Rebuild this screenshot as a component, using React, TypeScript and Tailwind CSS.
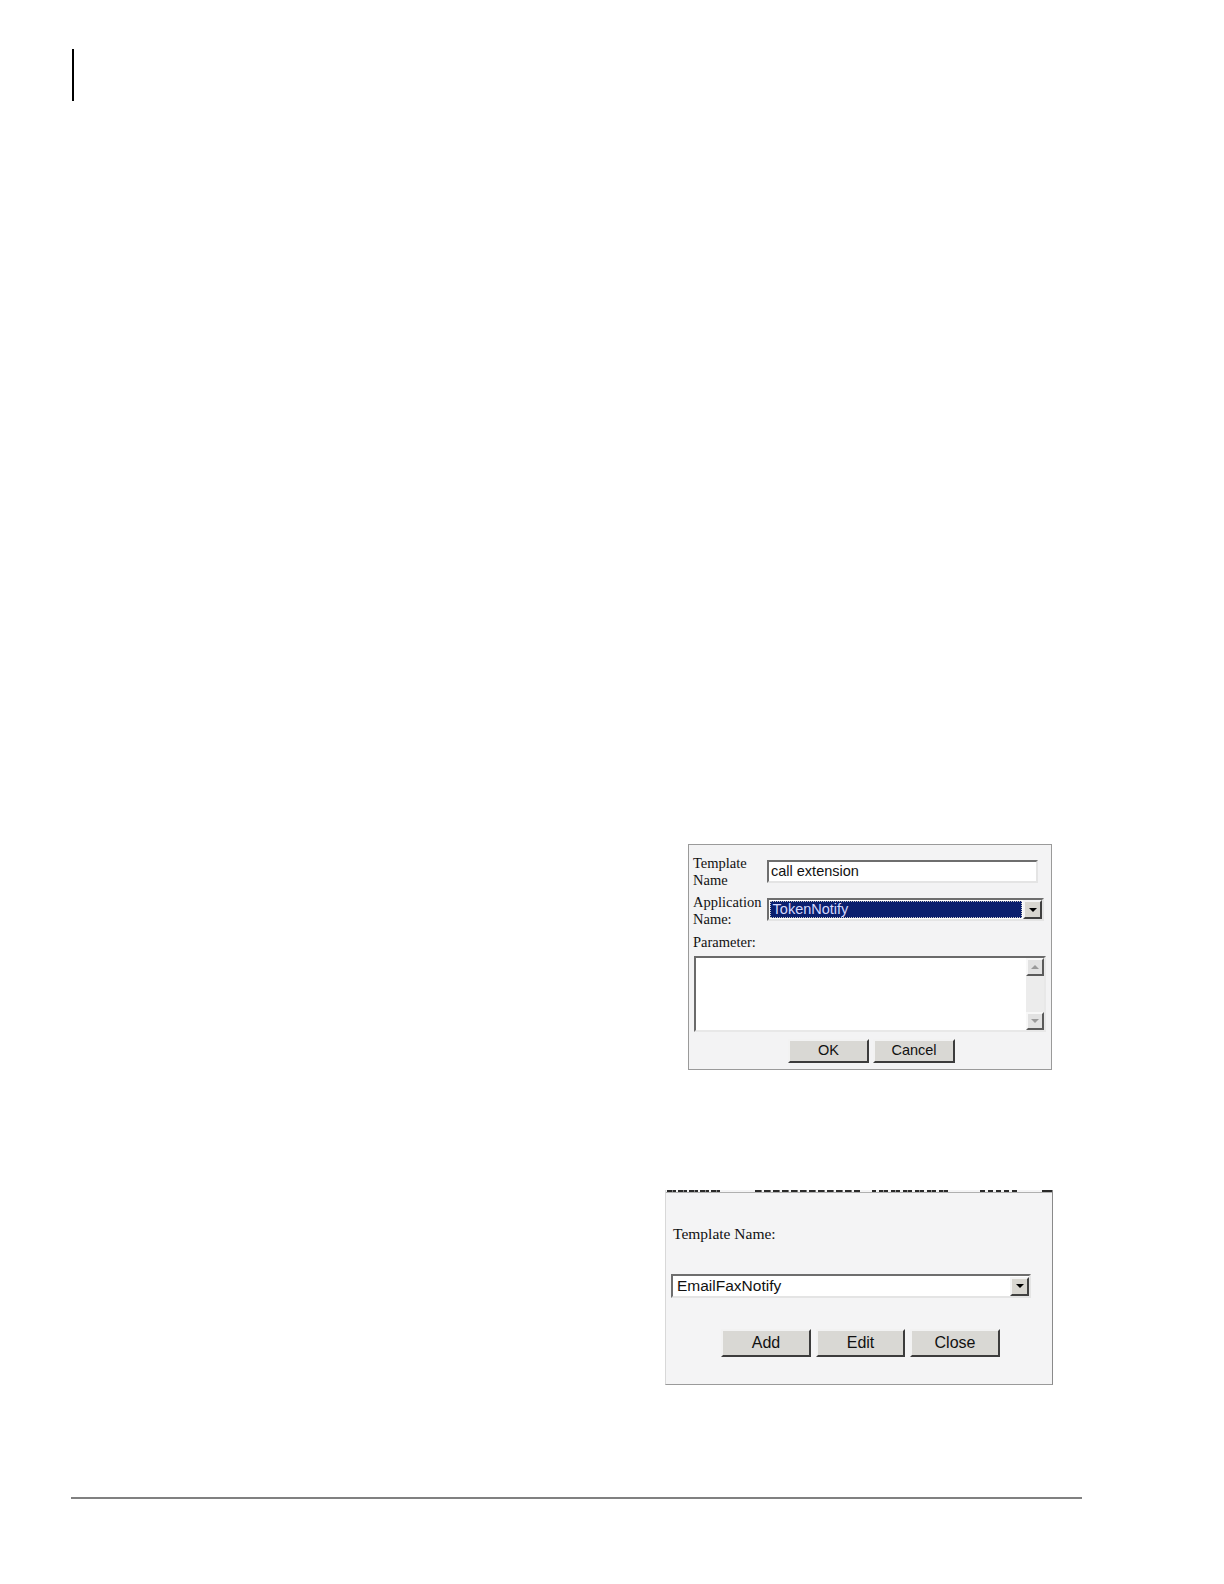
import React from "react";

const serif = { fontFamily: '"Liberation Serif", "Times New Roman", serif' };
const sans = { fontFamily: '"Liberation Sans", Arial, sans-serif' };

function Tri({ dir = "down", color = "#000" }: { dir?: "down" | "up"; color?: string }) {
  return (
    <svg width="8" height="4" viewBox="0 0 8 4">
      {dir === "down" ? (
        <polygon points="0,0 8,0 4,4" fill={color} />
      ) : (
        <polygon points="0,4 8,4 4,0" fill={color} />
      )}
    </svg>
  );
}

function DropBtn({ size = 17 }: { size?: number }) {
  return (
    <div
      className="flex items-center justify-center bg-[#d8d6d0] border-2 border-t-[#f4f4f4] border-l-[#f4f4f4] border-b-[#404040] border-r-[#404040] shrink-0"
      style={{ width: size, height: size }}
    >
      <Tri />
    </div>
  );
}

function Btn({ label, w, h }: { label: string; w: string; h: string }) {
  return (
    <div
      className={`${w} ${h} flex items-center justify-center bg-[#d9d8d4] border-2 border-t-[#f2f2f2] border-l-[#f2f2f2] border-b-[#3c3c3c] border-r-[#3c3c3c] text-[#111]`}
      style={sans}
    >
      {label}
    </div>
  );
}

export default function App() {
  return (
    <div className="w-[1224px] h-[1584px] bg-white overflow-hidden">
      {/* top-left vertical rule */}
      <div className="pt-[49px] pl-[72px]">
        <div className="w-[2px] h-[52px] bg-black" />
      </div>

      {/* Dialog 1 */}
      <div className="mt-[743px] ml-[688px] w-[364px] h-[226px] bg-[#f3f3f4] border border-[#9a9a9a] flex flex-col pl-[4px] pr-[7px]">
        <div className="flex mt-[10px]">
          <div className="w-[74px] text-[14.5px] leading-[17px] text-[#111]" style={serif}>
            Template
            <br />
            Name
          </div>
          <div className="mt-[5px] w-[271px] h-[23px] bg-white border-2 border-t-[#6e6e6e] border-l-[#6e6e6e] border-b-[#e4e4e4] border-r-[#e4e4e4] flex items-center pl-[2px] text-[14.5px] text-[#111]" style={sans}>
            call extension
          </div>
        </div>
        <div className="flex mt-[5px]">
          <div className="w-[74px] text-[14.5px] leading-[17px] text-[#111]" style={serif}>
            Application
            <br />
            Name:
          </div>
          <div className="mt-[4px] w-[279px] h-[23px] bg-white border-2 border-t-[#6e6e6e] border-l-[#6e6e6e] border-b-[#e4e4e4] border-r-[#e4e4e4] flex items-center">
            <div className="flex-1 h-[17px] ml-[1px] mr-[1px] bg-[#0a1f6e] border border-dotted border-[#c8c8c8] flex items-center pl-[2px] text-[14.5px] text-[#d4d8ff]" style={sans}>
              TokenNotify
            </div>
            <DropBtn size={19} />
          </div>
        </div>
        <div className="mt-[6px] text-[14.5px] leading-[17px] text-[#111]" style={serif}>
          Parameter:
        </div>
        <div className="mt-[5px] ml-[1px] w-[352px] h-[76px] bg-white border-2 border-t-[#6a6a6a] border-l-[#6a6a6a] border-b-[#e8e8e8] border-r-[#e8e8e8] flex justify-end">
          <div className="w-[18px] h-full flex flex-col bg-[#ececec]">
            <div className="h-[18px] flex items-center justify-center bg-[#e2e2e2] border-2 border-t-[#f8f8f8] border-l-[#f8f8f8] border-b-[#5a5a5a] border-r-[#5a5a5a]">
              <Tri dir="up" color="#9a9a9a" />
            </div>
            <div className="flex-1" />
            <div className="h-[18px] flex items-center justify-center bg-[#e2e2e2] border-2 border-t-[#f8f8f8] border-l-[#f8f8f8] border-b-[#5a5a5a] border-r-[#5a5a5a]">
              <Tri dir="down" color="#9a9a9a" />
            </div>
          </div>
        </div>
        <div className="flex mt-[7px] ml-[95px] gap-[4px] text-[14.5px]">
          <Btn label="OK" w="w-[81px]" h="h-[24px]" />
          <Btn label="Cancel" w="w-[82px]" h="h-[24px]" />
        </div>
      </div>

      {/* Dialog 2 */}
      <div className="mt-[120px] ml-[665px] w-[388px] h-[195px] bg-[#f4f4f5] border-l border-l-[#d8d8d8] border-r border-r-[#8a8a8a] border-b border-b-[#9a9a9a] flex flex-col">
        {/* remnants of the table row above (cut off) */}
        <div className="h-[3px] flex items-end border-b border-[#b0b0b0]">
          <div className="h-[2px] w-[55px] ml-[1px] bg-[repeating-linear-gradient(90deg,#2a2a2a_0_5px,#888_5px_6px,#2a2a2a_6px_9px,transparent_9px_11px)]" />
          <div className="h-[2px] w-[105px] ml-[33px] bg-[repeating-linear-gradient(90deg,#2a2a2a_0_6px,#777_6px_7px,transparent_7px_9px)]" />
          <div className="h-[2px] w-[78px] ml-[12px] bg-[repeating-linear-gradient(90deg,#2a2a2a_0_4px,transparent_4px_7px,#2a2a2a_7px_11px,#999_11px_12px)]" />
          <div className="h-[2px] w-[39px] ml-[30px] bg-[repeating-linear-gradient(90deg,#2a2a2a_0_5px,transparent_5px_8px)]" />
          <div className="h-[2px] w-[10px] ml-[23px] bg-[#2a2a2a]" />
        </div>
        <div className="mt-[32px] ml-[7px] text-[15.5px] leading-[18px] text-[#111]" style={serif}>
          Template Name:
        </div>
        <div className="mt-[31px] ml-[5px] w-[360px] h-[24px] bg-white border-2 border-t-[#6e6e6e] border-l-[#6e6e6e] border-b-[#e4e4e4] border-r-[#e4e4e4] flex items-center">
          <div className="flex-1 pl-[4px] text-[15.5px] text-[#111]" style={sans}>
            EmailFaxNotify
          </div>
          <DropBtn size={19} />
        </div>
        <div className="flex mt-[31px] ml-[55px] gap-[5px] text-[16px]">
          <Btn label="Add" w="w-[90px]" h="h-[28px]" />
          <Btn label="Edit" w="w-[89px]" h="h-[28px]" />
          <Btn label="Close" w="w-[90px]" h="h-[28px]" />
        </div>
      </div>

      {/* bottom rule */}
      <div className="mt-[112px] ml-[71px] w-[1011px] h-[2px] bg-[#808080]" />
    </div>
  );
}
